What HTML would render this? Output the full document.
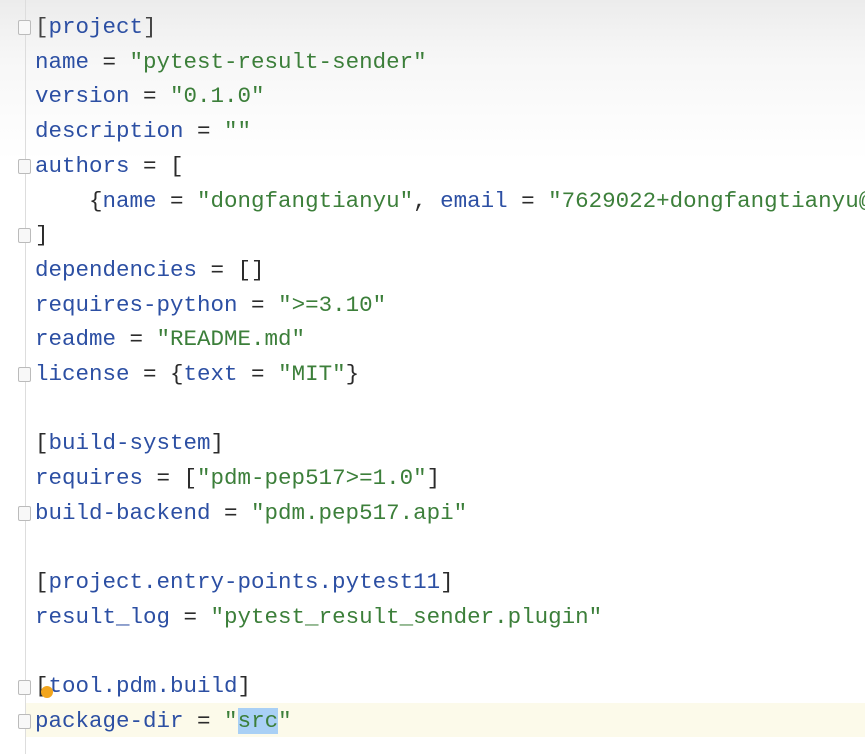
<!DOCTYPE html>
<html><head><style>
html,body{margin:0;width:865px;height:754px;overflow:hidden;}
body{background:linear-gradient(#ececec 0px,#f7f7f7 60px,#fff 160px);font-family:"Liberation Mono",monospace;position:relative}
.gut{position:absolute;left:25px;top:0;width:1px;height:754px;background:#ddd}
.hl{position:absolute;left:26px;top:703px;width:839px;height:34px;background:#fcfaea}
.code{position:absolute;left:35px;top:10px;width:830px;overflow:hidden;font-size:22.5px;line-height:34.7px;white-space:pre;color:#2b2b2b}
.k{color:#2c4fa3}.s{color:#3c7f3a}.p{color:#444}
.sel{background:#a9d0f5}
.f{position:absolute;left:18px;width:11px;height:13px;border:1px solid #bbb;background:#f8f8f8;border-radius:2px}
.dot{position:absolute;left:41px;top:686px;width:12px;height:12px;border-radius:6px;background:#f2a51c}
</style></head><body>
<div class="gut"></div><div class="hl"></div>
<div class="f" style="top:20px"></div><div class="f" style="top:159px"></div><div class="f" style="top:228px"></div><div class="f" style="top:367px"></div><div class="f" style="top:506px"></div><div class="f" style="top:680px"></div><div class="f" style="top:714px"></div>
<div class="code"><span class="p">[</span><span class="k">project</span><span class="p">]</span>
<span class="k">name</span> = <span class="s">"pytest-result-sender"</span>
<span class="k">version</span> = <span class="s">"0.1.0"</span>
<span class="k">description</span> = <span class="s">""</span>
<span class="k">authors</span> = [
    {<span class="k">name</span> = <span class="s">"dongfangtianyu"</span>, <span class="k">email</span> = <span class="s">"7629022+dongfangtianyu@qq</span>
]
<span class="k">dependencies</span> = []
<span class="k">requires-python</span> = <span class="s">"&gt;=3.10"</span>
<span class="k">readme</span> = <span class="s">"README.md"</span>
<span class="k">license</span> = {<span class="k">text</span> = <span class="s">"MIT"</span>}

[<span class="k">build-system</span>]
<span class="k">requires</span> = [<span class="s">"pdm-pep517&gt;=1.0"</span>]
<span class="k">build-backend</span> = <span class="s">"pdm.pep517.api"</span>

[<span class="k">project.entry-points.pytest11</span>]
<span class="k">result_log</span> = <span class="s">"pytest_result_sender.plugin"</span>

[<span class="k">tool.pdm.build</span>]
<span class="k">package-dir</span> = <span class="s">"<span class="sel">src</span>"</span></div>
<div class="dot"></div>
</body></html>
